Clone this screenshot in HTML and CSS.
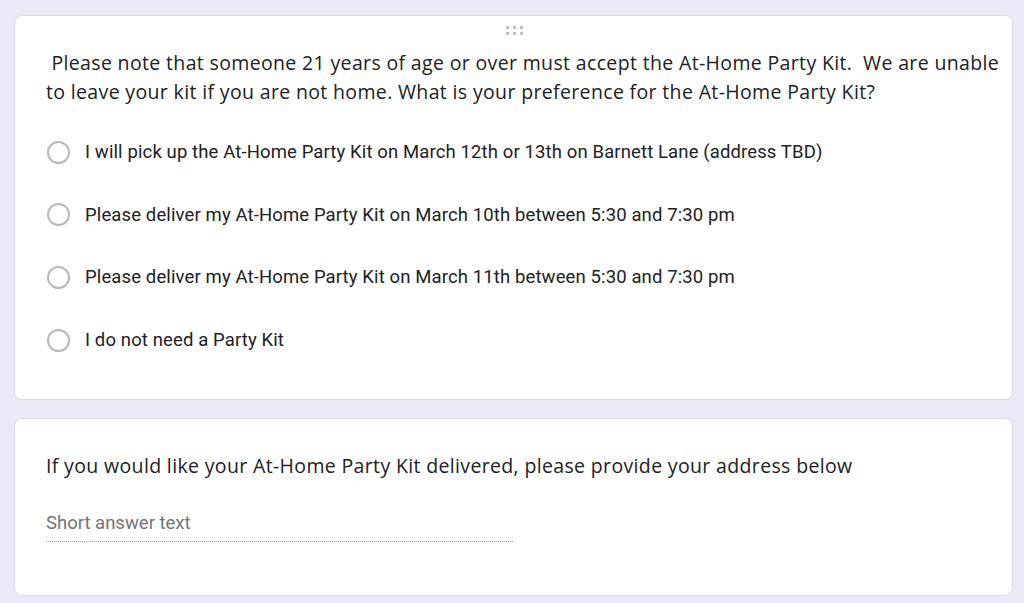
FILE: index.html
```html
<!DOCTYPE html>
<html>
<head>
<meta charset="utf-8">
<link rel="stylesheet" href="styles.css">
</head>
<body>
<div class="page">
  <div class="card card-q1">
    <div class="handle">
      <span></span><span></span><span></span>
      <span></span><span></span><span></span>
    </div>
    <div class="question">&nbsp;Please note that someone 21 years of age or over must accept the At-Home Party Kit.&nbsp; We are unable to leave your kit if you are not home. What is your preference for the At-Home Party Kit?</div>
    <div class="options">
      <div class="option"><span class="radio"></span><span class="label">I will pick up the At-Home Party Kit on March 12th or 13th on Barnett Lane (address TBD)</span></div>
      <div class="option"><span class="radio"></span><span class="label">Please deliver my At-Home Party Kit on March 10th between 5:30 and 7:30 pm</span></div>
      <div class="option"><span class="radio"></span><span class="label">Please deliver my At-Home Party Kit on March 11th between 5:30 and 7:30 pm</span></div>
      <div class="option"><span class="radio"></span><span class="label">I do not need a Party Kit</span></div>
    </div>
  </div>
  <div class="card card-q2">
    <div class="question q2">If you would like your At-Home Party Kit delivered, please provide your address below</div>
    <div class="short">Short answer text</div>
    <div class="dotline"></div>
  </div>
</div>
</body>
</html>
```
FILE: styles.css
```css
html, body {
  margin: 0;
  padding: 0;
  background: #ece8f5;
}
.page {
  padding: 15px 11px 0 14px;
  display: flex;
  flex-direction: column;
  gap: 18px;
}
.card {
  background: #ffffff;
  border: 1px solid #dadce0;
  border-radius: 8px;
  box-sizing: border-box;
  width: 999px;
  position: relative;
}
.card-q1 {
  height: 385px;
  padding: 32px 0 0 31px;
}
.card-q2 {
  height: 178px;
  padding: 32px 0 0 31px;
}
.handle {
  position: absolute;
  top: 10px;
  left: 491px;
  display: grid;
  grid-template-columns: repeat(3, 3px);
  grid-auto-rows: 3px;
  gap: 3px 4px;
}
.handle span {
  width: 3px;
  height: 3px;
  background: #b7b7b7;
  border-radius: 1px;
}
.question {
  font-family: "Open Sans", sans-serif;
  font-size: 19.5px;
  line-height: 29px;
  color: #202124;
  letter-spacing: 0.35px;
  width: 962px;
}
.options {
  margin-top: 34px;
  display: flex;
  flex-direction: column;
  gap: 38.7px;
}
.option {
  display: flex;
  align-items: center;
  height: 24px;
  padding-left: 1px;
}
.radio {
  width: 19px;
  height: 19px;
  border: 2px solid #b9b9b9;
  border-radius: 50%;
  box-sizing: content-box;
  flex: none;
}
.label {
  margin-left: 15px;
  font-family: Roboto, sans-serif;
  font-size: 18.5px;
  letter-spacing: 0.12px;
  color: #202124;
}
.q2 {
  margin-top: 0;
}
.short {
  margin-top: 31px;
  font-family: Roboto, sans-serif;
  font-size: 18.5px;
  color: #70757a;
  line-height: 24px;
}
.dotline {
  margin-top: 6px;
  width: 467px;
  border-bottom: 1px dotted #9a9a9a;
}
```
